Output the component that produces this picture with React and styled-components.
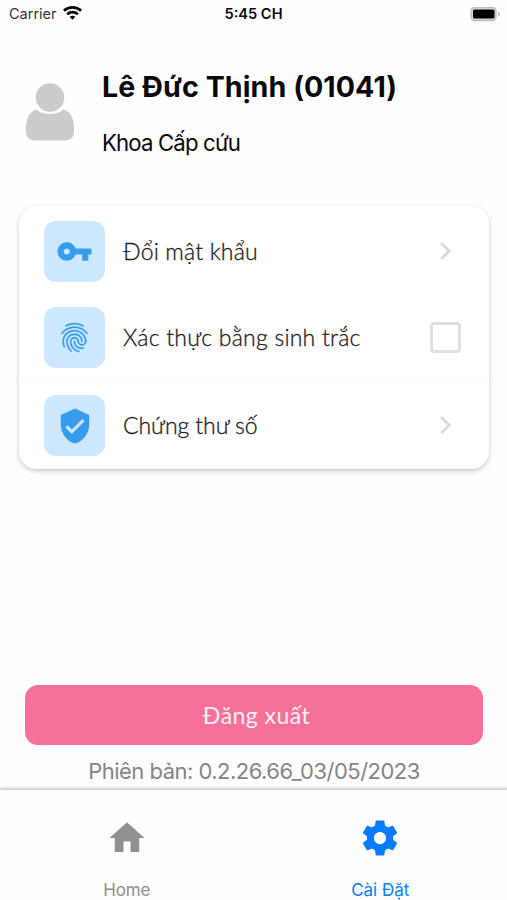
import React from 'react';
import styled, { createGlobalStyle } from 'styled-components';
import { MdFingerprint } from 'react-icons/md';

const GlobalStyle = createGlobalStyle`
  * { box-sizing: border-box; }
  body { margin: 0; background: #fefefe; }
`;

const Screen = styled.main`
  display: flex;
  flex-direction: column;
  width: 507px;
  height: 900px;
  overflow: hidden;
  background: #fefefe;
  color: #080808;
  font-family: Inter, 'Noto Sans', sans-serif;
`;

const Label = styled.span`
  white-space: nowrap;
  font-size: ${(p) => p.$size}px;
  line-height: 1.2;
  font-weight: ${(p) => p.$weight || 400};
  letter-spacing: ${(p) => p.$spacing || 0}px;
`;

const StatusBar = styled.header`
  display: grid;
  grid-template-columns: 1fr auto 1fr;
  align-items: center;
  height: 28px;
  padding: 0 6px 0 9px;
`;

const Carrier = styled.div`
  display: flex;
  align-items: center;
  gap: 6px;
  color: #333;
`;

const Clock = styled(Label)`
  margin: 1px 3px 0 0;
`;

const BatterySlot = styled.div`
  display: flex;
  justify-content: flex-end;
`;

const Profile = styled.section`
  display: flex;
  height: 178px;
  padding: 40px 26px 0;
  gap: 28px;
`;

const Avatar = styled.svg`
  width: 48px;
  height: 58px;
  margin-top: 15px;
  fill: #cbcbcb;
`;

const Identity = styled.div`
  display: flex;
  flex-direction: column;
  gap: 26px;
  padding-top: 2px;
`;

const Card = styled.section`
  margin: 0 18px 0 19px;
  height: 263px;
  padding-top: 15px;
  border-radius: 18px;
  background: #fff;
  box-shadow: 0 2px 5px rgba(0, 0, 0, 0.22);
`;

const MenuRow = styled.div`
  display: flex;
  align-items: center;
  height: 61px;
  margin-bottom: ${(p) => p.$gap || 0}px;
  padding: 0 28px 0 25px;
  color: #1c1c1c;
`;

const MenuLabel = styled(Label)`
  flex: 1;
  margin-left: 18px;
  font-family: Lato, 'Noto Sans', sans-serif;
  -webkit-text-stroke: 0.3px currentColor;
`;

const Tile = styled.div`
  display: grid;
  place-items: center;
  width: 61px;
  height: 61px;
  border-radius: 12px;
  background: #cde7fe;
  color: #369ced;
`;

const FingerprintIcon = styled(MdFingerprint)`
  width: 35px;
  height: 35px;

  path:not([fill='none']) {
    stroke: currentColor;
    stroke-width: 0.2;
  }
`;

const Divider = styled.div`
  height: 1px;
  margin-bottom: 13px;
  background: #f9f9f9;
`;

const Chevron = styled.svg`
  width: 11px;
  height: 18px;
  margin: -1px 10px 0 0;
  fill: none;
  stroke: #dadada;
  stroke-width: 2.9;
`;

const Checkbox = styled.div`
  width: 31px;
  height: 31px;
  border: 3px solid #dfdfdf;
  border-radius: 4px;
`;

const Footer = styled.section`
  display: flex;
  flex-direction: column;
  align-items: center;
  margin-top: auto;
  height: 105px;
  padding: 0 24px 0 25px;
  color: #858585;
`;

const LogoutButton = styled.button`
  width: 100%;
  height: 60px;
  margin-bottom: 13px;
  padding: 2px 0 0 5px;
  border: 0;
  border-radius: 13px;
  background: #f67199;
  color: #fff0f5;
  font-family: inherit;
`;

const LogoutLabel = styled(Label)`
  font-family: Lato, 'Noto Sans', sans-serif;
`;

const TabBar = styled.nav`
  display: grid;
  grid-template-columns: 1fr 1fr;
  height: 110px;
  background: #fefefe;
  box-shadow: 0 -1px 3px 1px rgba(0, 0, 0, 0.22);
`;

const Tab = styled.div`
  display: flex;
  flex-direction: column;
  align-items: center;
  padding-top: 27px;
  gap: 21px;
  color: ${(p) => (p.$active ? '#087cff' : '#909090')};
`;

const TabIcon = styled.div`
  display: grid;
  place-items: center;
  height: 42px;
`;

const Glyph = ({ d, size }) => (
  <svg width={size} height={size} viewBox="0 0 24 24" fill="currentColor"><path d={d} /></svg>
);

const paths = {
  key: 'M12.65 10C11.83 7.67 9.61 6 7 6c-3.31 0-6 2.69-6 6s2.69 6 6 6c2.61 0 4.83-1.67 5.65-4H17v4h4v-4h2v-4H12.65zM7 14c-1.1 0-2-.9-2-2s.9-2 2-2 2 .9 2 2-.9 2-2 2z',
  shield: 'M12 1L3 5v6c0 5.55 3.84 10.74 9 12 5.16-1.26 9-6.45 9-12V5l-9-4zm-2 16l-4-4 1.41-1.41L10 14.17l6.59-6.59L18 9l-8 8z',
  home: 'M10 20v-6h4v6h5v-8h3L12 3 2 12h3v8z',
  gear: 'M19.43 12.98c.04-.32.07-.64.07-.98s-.03-.66-.07-.98l2.11-1.65c.19-.15.24-.42.12-.64l-2-3.46c-.12-.22-.39-.3-.61-.22l-2.49 1c-.52-.4-1.08-.73-1.69-.98l-.38-2.65C14.46 2.18 14.25 2 14 2h-4c-.25 0-.46.18-.49.42l-.38 2.65c-.61.25-1.17.59-1.69.98l-2.49-1c-.23-.09-.49 0-.61.22l-2 3.46c-.13.22-.07.49.12.64l2.11 1.65c-.04.32-.07.65-.07.98s.03.66.07.98l-2.11 1.65c-.19.15-.24.42-.12.64l2 3.46c.12.22.39.3.61.22l2.49-1c.52.4 1.08.73 1.69.98l.38 2.65c.03.24.24.42.49.42h4c.25 0 .46-.18.49-.42l.38-2.65c.61-.25 1.17-.59 1.69-.98l2.49 1c.23.09.49 0 .61-.22l2-3.46c.12-.22.07-.49-.12-.64l-2.11-1.65zM12 15.5c-1.93 0-3.5-1.57-3.5-3.5s1.57-3.5 3.5-3.5 3.5 1.57 3.5 3.5-1.57 3.5-3.5 3.5z',
};

const Wifi = () => (
  <svg width="19" height="15" viewBox="0 0 19 15" fill="none" stroke="#080808" strokeWidth="2.7">
    <path d="M.9 4.7C5.8.3 13.2.3 18.1 4.7" />
    <path d="M4.1 8.2c3.1-2.8 7.7-2.8 10.8 0" />
    <path d="M6.7 10.7c1.7-1.4 3.9-1.4 5.6 0L9.5 13.7z" fill="#080808" stroke="none" />
  </svg>
);

const Battery = () => (
  <svg width="31" height="15" viewBox="0 0 31 15">
    <rect x="1" y="0.5" width="25" height="13" rx="3.5" fill="#d8d8d8" stroke="#bdbdbd" strokeWidth="1.3" />
    <rect x="3" y="2.5" width="21.5" height="9" rx="1.6" fill="#000" />
    <path d="M28 4.7c2.6.6 2.6 4 0 4.6z" fill="#bdbdbd" />
  </svg>
);

const Arrow = () => <Chevron viewBox="0 0 11 18"><path d="M1.2 1l8 8-8 8" /></Chevron>;

export default function App() {
  return (
    <>
      <GlobalStyle />
      <Screen>
        <StatusBar>
          <Carrier><Label $size={14.5}>Carrier</Label><Wifi /></Carrier>
          <Clock $size={14.6} $weight={600}>5:45 CH</Clock>
          <BatterySlot><Battery /></BatterySlot>
        </StatusBar>
        <Profile>
          <Avatar viewBox="0 0 48 58">
            <circle cx="24" cy="14.5" r="14.3" />
            <path d="M11 26.5C15 32.5 33 32.5 37 26.5 44 27.5 48 35 48 45v3c0 6-3 9.5-9 9.5H9C3 57.5 0 54 0 48v-3c0-10 4-17.5 11-18.5z" />
          </Avatar>
          <Identity>
            <Label $size={28.6} $weight={700} $spacing={0.08}>Lê Đức Thịnh (01041)</Label>
            <Label $size={22.2} $spacing={-0.85}>Khoa Cấp cứu</Label>
          </Identity>
        </Profile>
        <Card>
          <MenuRow $gap={25}>
            <Tile><Glyph d={paths.key} size={37} /></Tile>
            <MenuLabel $size={23} $weight={300} $spacing={0.18}>Đổi mật khẩu</MenuLabel>
            <Arrow />
          </MenuRow>
          <MenuRow $gap={13}>
            <Tile><FingerprintIcon /></Tile>
            <MenuLabel $size={23} $weight={300} $spacing={0.22}>Xác thực bằng sinh trắc</MenuLabel>
            <Checkbox />
          </MenuRow>
          <Divider />
          <MenuRow>
            <Tile><Glyph d={paths.shield} size={38} /></Tile>
            <MenuLabel $size={23} $weight={300} $spacing={-0.08}>Chứng thư số</MenuLabel>
            <Arrow />
          </MenuRow>
        </Card>
        <Footer>
          <LogoutButton><LogoutLabel $size={23} $spacing={0.45}>Đăng xuất</LogoutLabel></LogoutButton>
          <Label $size={22} $spacing={-0.52}>Phiên bản: 0.2.26.66_03/05/2023</Label>
        </Footer>
        <TabBar>
          <Tab>
            <TabIcon><Glyph d={paths.home} size={42} /></TabIcon>
            <Label $size={17} $spacing={-0.2}>Home</Label>
          </Tab>
          <Tab $active>
            <TabIcon><Glyph d={paths.gear} size={42} /></TabIcon>
            <Label $size={17}>Cài Đặt</Label>
          </Tab>
        </TabBar>
      </Screen>
    </>
  );
}
